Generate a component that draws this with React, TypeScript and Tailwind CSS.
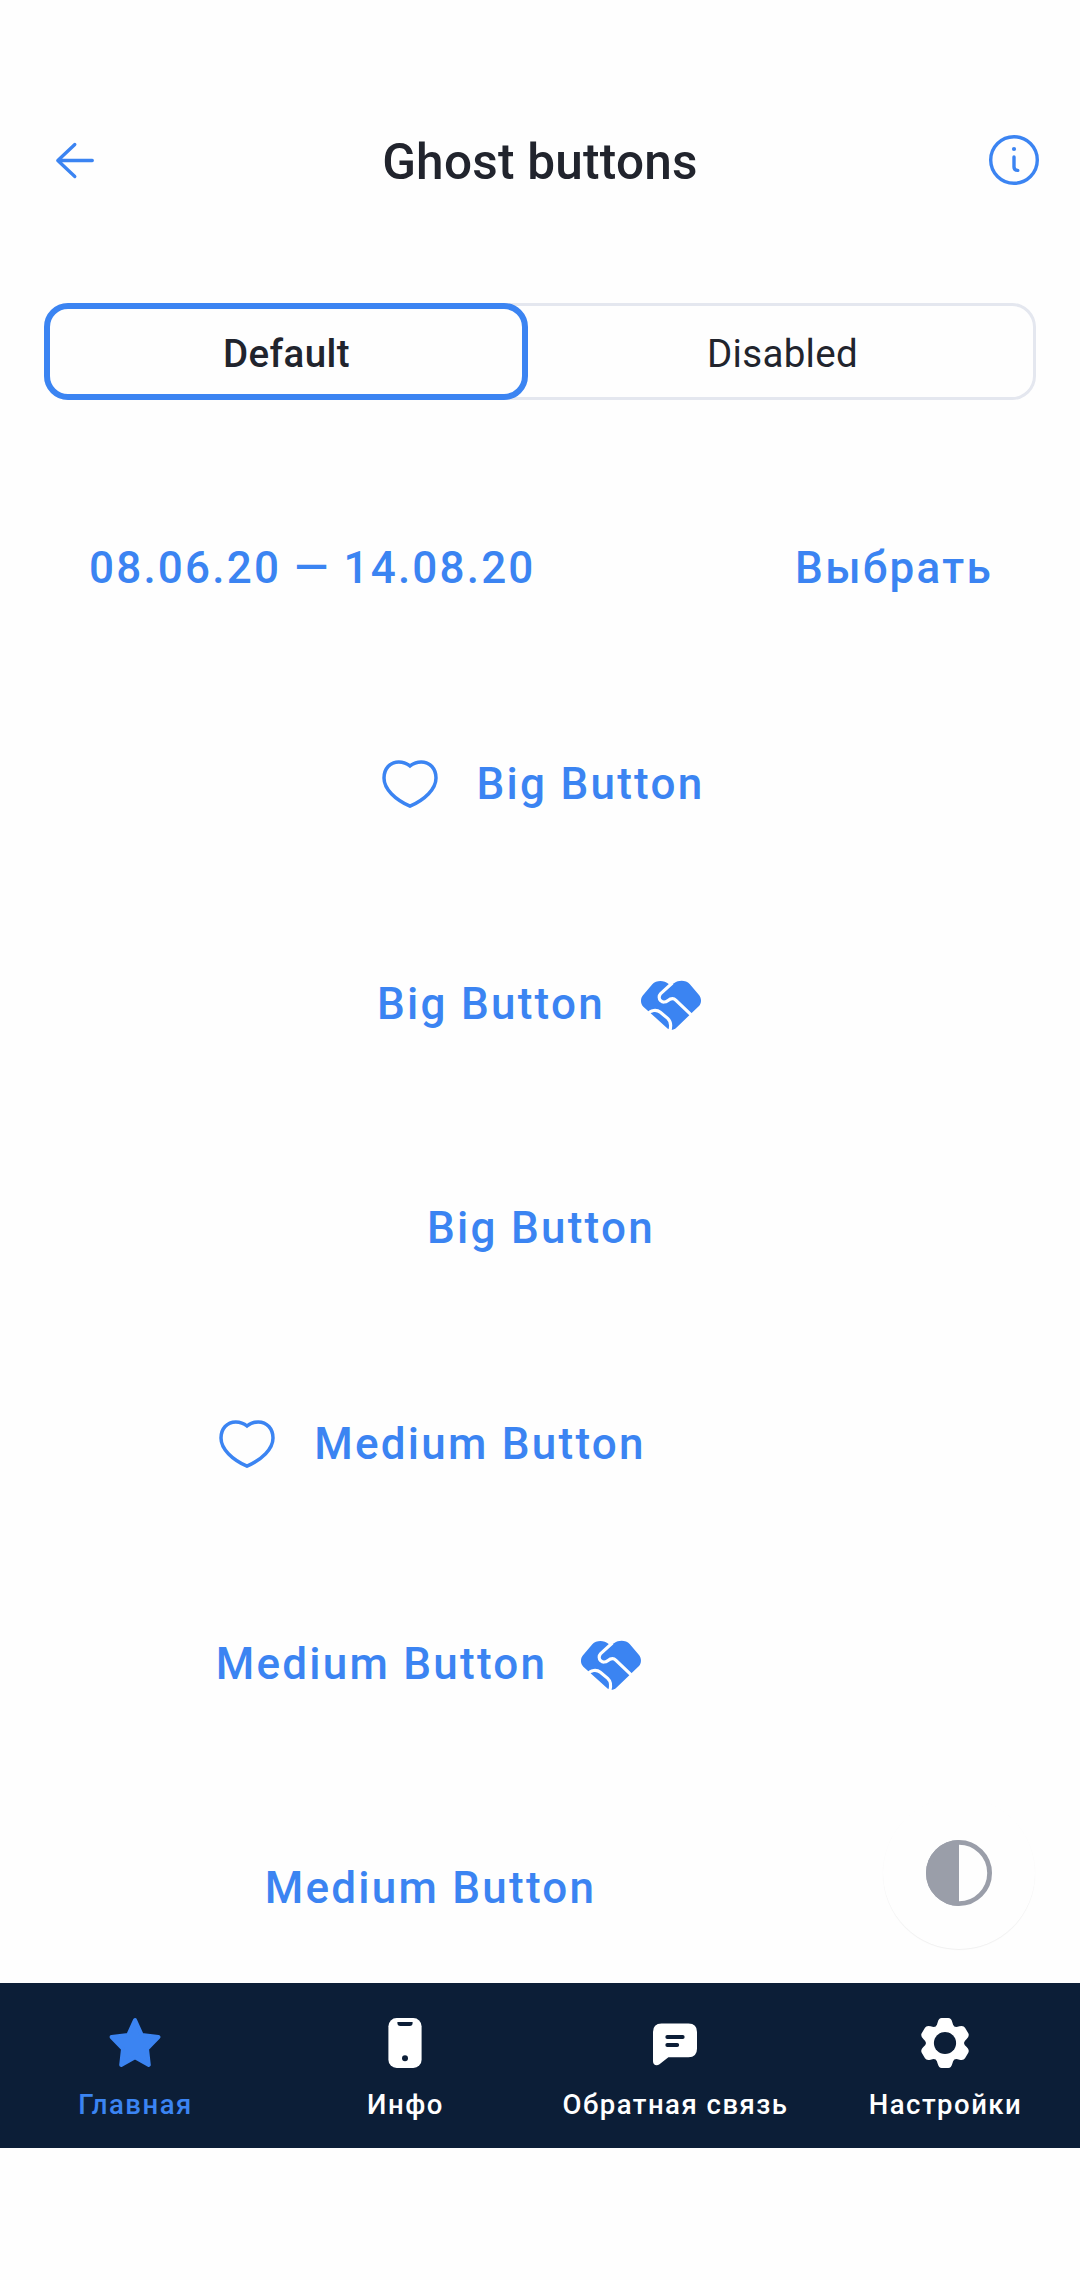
import type { ReactNode } from "react";

const BLUE = "#3b84f2";
const NAVY = "#0c1e37";

function BackIcon() {
  return (
    <svg width="66" height="66" viewBox="0 0 66 66" fill="none" stroke={BLUE} strokeWidth="3.3" strokeLinecap="round" strokeLinejoin="round">
      <path d="M32.800 17.500 15.800 33.500l17 16M16.500 33.500H50.300" />
    </svg>
  );
}

function InfoIcon() {
  return (
    <svg width="66" height="66" viewBox="0 0 66 66" fill="none" stroke={BLUE} strokeWidth="3.4" strokeLinecap="round">
      <circle cx="33" cy="33" r="23.3" />
      <circle cx="33" cy="22" r="2.1" fill={BLUE} stroke="none" />
      <path d="M33 30V40Q33 43.400 36.800 43.400" />
    </svg>
  );
}

function HeartIcon() {
  return (
    <svg width="66" height="66" viewBox="0 0 66 66" fill="none" stroke={BLUE} strokeWidth="3.5">
      <path d="M33 15C29.5 12 25.8 10.9 21.8 10.9C13 10.9 7 17.8 7 27C7 38 18 48.5 33 55.2C48 48.5 59 38 59 27C59 17.8 53 10.9 44.2 10.9C40.2 10.9 36.5 12 33 15Z" />
    </svg>
  );
}

function HandshakeIcon() {
  return (
    <svg width="66" height="66" viewBox="51 33 198 198" fill="none">
      <path
        fill={BLUE}
        d="M152 76L163 69C176 60 198 60 209 72L237 105C245 115 245 130 237 138L169 203C160 211.500 149 211.500 140 203L70 140C60.500 131 61 115 69 106L97 73C109 60 132 60 146 72Z"
      />
      <path stroke="#fefefe" strokeWidth="9.500" d="M157 69L122 101C116 107 116 117 122 122C128 128 137 127 143 122C152 115 161 114 168 121L216 167" />
      <path stroke="#fefefe" strokeWidth="9.500" d="M82 164C92 149 110 148 121 157L143 175C153 184 154 198 149 214" />
    </svg>
  );
}

function StarIcon() {
  return (
    <svg width="66" height="66" viewBox="0 0 66 66" fill={BLUE} stroke={BLUE} strokeWidth="4" strokeLinejoin="round">
      <path d="M33 10L26.300 24.900L9.600 27L21 38.800L19.200 54.900L33 47.300L46.800 54.900L45 38.800L56.400 27L39.700 24.900Z" />
    </svg>
  );
}

function PhoneIcon() {
  return (
    <svg width="66" height="66" viewBox="0 0 66 66">
      <rect x="16.400" y="8" width="33.200" height="50" rx="8.300" fill="#fff" />
      <path d="M25.400 12H40.600V13Q40.600 16 37.600 16H28.400Q25.400 16 25.400 13Z" fill={NAVY} />
      <circle cx="33" cy="48.300" r="3" fill={NAVY} />
    </svg>
  );
}

function ChatIcon() {
  return (
    <svg width="66" height="66" viewBox="0 0 66 66">
      <path d="M19.500 13.500H46.500Q55 13.500 55 22V38.800Q55 47.300 46.500 47.300H26.400L17.500 54.300C14.500 56.500 11 55 11 51.300V22Q11 13.500 19.500 13.500Z" fill="#fff" />
      <path d="M25.300 27H40.700M25.300 35H35.200" stroke={NAVY} strokeWidth="3.900" strokeLinecap="round" />
    </svg>
  );
}

function GearIcon() {
  return (
    <svg width="66" height="66" viewBox="0 0 66 66">
      <g transform="translate(33 33)" fill="#fff">
        <circle r="18" />
        {[0, 60, 120, 180, 240, 300].map((a) => (
          <path
            key={a}
            transform={`rotate(${a})`}
            d="M0 0L-9.500 -16.450Q-8 -17.300 -7.300 -20.800Q-6.200 -25 -3.300 -25H3.300Q6.200 -25 7.300 -20.800Q8 -17.300 9.500 -16.450Z"
          />
        ))}
        <circle r="11.100" fill={NAVY} />
      </g>
    </svg>
  );
}

function ContrastIcon() {
  return (
    <svg width="66" height="66" viewBox="0 0 66 66">
      <circle cx="33" cy="33" r="30.600" fill="none" stroke="#9a9ea9" strokeWidth="4.800" />
      <path d="M33 0A33 33 0 0 0 33 66Z" fill="#9a9ea9" />
    </svg>
  );
}

function GhostButton({ children, before, after }: { children: ReactNode; before?: ReactNode; after?: ReactNode }) {
  return (
    <button className="flex h-[132px] w-full items-center justify-center text-[44px] leading-[60px] font-medium tracking-[2.25px] whitespace-nowrap text-[#3b84f2]">
      {before && <span className="mr-[34px] ml-px">{before}</span>}
      <span className={before || after ? "" : "pl-[2px]"}>{children}</span>
      {after}
    </button>
  );
}

function NavItem({ icon, label, active }: { icon: ReactNode; label: string; active?: boolean }) {
  return (
    <a className={`flex flex-1 flex-col items-center pt-[27px] ${active ? "text-[#3b84f2]" : "text-white"}`}>
      {icon}
      <span className="mt-[12px] pl-px text-[27.5px] leading-[34px] font-medium tracking-[1.5px] whitespace-nowrap">{label}</span>
    </a>
  );
}

export default function App() {
  return (
    <div className="flex h-[2280px] w-[1080px] flex-col overflow-hidden bg-[#fefefe] font-['Roboto',sans-serif] text-[#21242d]">
      <header className="mt-[94px] flex h-[132px] shrink-0 items-center justify-between pr-[33px] pl-[42px]">
        <BackIcon />
        <h1 className="pt-[4px] pr-[9px] text-[49.5px] leading-[60px] font-medium tracking-[0.25px]">Ghost buttons</h1>
        <InfoIcon />
      </header>

      <div className="mx-[44px] mt-[77px] flex h-[97px] shrink-0 rounded-[24px] shadow-[inset_0_0_0_3px_#e4e7ef]">
        <div className="flex w-[484px] items-center justify-center rounded-[24px] border-[6px] border-[#3b84f2] pt-[4px] pl-px text-[38.5px] leading-[48px] font-medium tracking-[0.4px]">Default</div>
        <div className="flex flex-1 items-center justify-center pt-[4px] pl-px text-[38.5px] leading-[48px] tracking-[0.3px]">Disabled</div>
      </div>

      <main className="relative h-[1583px] shrink-0 pt-[102px]">
        <div className="flex h-[132px] items-center justify-between pr-[87px] pl-[89px] text-[44px] leading-[60px] font-medium tracking-[2.3px] text-[#3b84f2]">
          <span className="tracking-[2.2px]">08.06.20 — 14.08.20</span>
          <span>Выбрать</span>
        </div>
        <div className="mt-[84px] flex flex-col">
          <GhostButton before={<HeartIcon />}>Big Button</GhostButton>
          <div className="mt-[88px]">
            <GhostButton after={<span className="ml-[32px]"><HandshakeIcon /></span>}>Big Button</GhostButton>
          </div>
          <div className="mt-[92px]">
            <GhostButton>Big Button</GhostButton>
          </div>
        </div>
        <div className="mt-[84px] ml-[44px] flex w-[771px] flex-col">
          <GhostButton before={<HeartIcon />}>Medium Button</GhostButton>
          <div className="mt-[88px]">
            <GhostButton after={<span className="ml-[30px]"><HandshakeIcon /></span>}>Medium Button</GhostButton>
          </div>
          <div className="mt-[92px]">
            <GhostButton>Medium Button</GhostButton>
          </div>
        </div>
        <button className="absolute right-[45px] bottom-[34px] flex size-[152px] items-center justify-center rounded-full bg-[#fefefe] shadow-[0_1px_1px_rgba(0,0,0,0.06)]">
          <ContrastIcon />
        </button>
      </main>

      <nav className="flex h-[165px] shrink-0 bg-[#0c1e37]">
        <NavItem icon={<StarIcon />} label="Главная" active />
        <NavItem icon={<PhoneIcon />} label="Инфо" />
        <NavItem icon={<ChatIcon />} label="Обратная связь" />
        <NavItem icon={<GearIcon />} label="Настройки" />
      </nav>
    </div>
  );
}
